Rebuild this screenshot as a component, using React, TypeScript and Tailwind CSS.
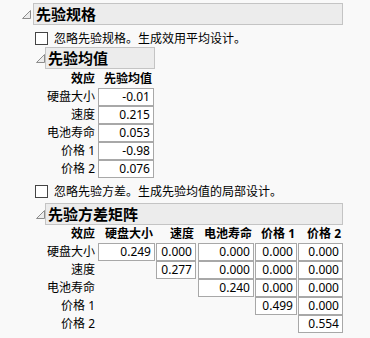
import React from "react";

const Tri = () => (
  <svg width="9" height="9" viewBox="0 0 9 9" className="shrink-0 block">
    <polygon points="8.5,0.5 8.5,8.5 0.5,8.5" fill="#ececec" stroke="#8c8c8c" strokeWidth="1" />
  </svg>
);

const CheckRow = ({ text }: { text: string }) => (
  <div className="flex items-center h-[13px]">
    <div className="w-[13px] h-[13px] border border-[#444] bg-white shrink-0" />
    <span className="ml-[6px] text-[12px] leading-[13px] whitespace-nowrap">{text}</span>
  </div>
);

const Box = ({ v, w }: { v: string; w: string }) => (
  <div className={`${w} h-[18px] border border-[#a8a8a8] bg-white flex items-center justify-end pr-[3px] text-[12px] leading-none`}>
    {v}
  </div>
);

const means = [
  ["硬盘大小", "-0.01"],
  ["速度", "0.215"],
  ["电池寿命", "0.053"],
  ["价格 1", "-0.98"],
  ["价格 2", "0.076"],
];

const cols = ["硬盘大小", "速度", "电池寿命", "价格 1", "价格 2"];
const colW = ["w-[58px]", "w-[42px]", "w-[57px]", "w-[43px]", "w-[45px]"];
const boxW = ["w-[57px]", "w-[40px]", "w-[56px]", "w-[42px]", "w-[45px]"];
const matrix = [
  ["0.249", "0.000", "0.000", "0.000", "0.000"],
  ["", "0.277", "0.000", "0.000", "0.000"],
  ["", "", "0.240", "0.000", "0.000"],
  ["", "", "", "0.499", "0.000"],
  ["", "", "", "", "0.554"],
];

export default function App() {
  return (
    <div className="w-[370px] h-[338px] bg-[#f9f9f9] text-black overflow-hidden font-['Noto_Sans','Noto_Sans_CJK_SC',sans-serif]">
      <div className="pt-[3px]">
        <div className="flex items-center h-[22px] pl-[22px]">
          <Tri />
          <div className="ml-[2px] w-[310px] h-[22px] bg-[#ececec] border border-[#c4c4c4] flex items-center pl-[2px] text-[15px] font-bold leading-none">
            先验规格
          </div>
        </div>
        <div className="pl-[35px]">
          <div className="mt-[7px]">
            <CheckRow text="忽略先验规格。生成效用平均设计。" />
          </div>
          <div className="mt-[2px] flex items-center h-[22px] pl-[1px]">
            <Tri />
            <div className="w-[110px] h-[22px] bg-[#ececec] border border-[#c4c4c4] flex items-center pl-[2px] text-[15px] font-bold leading-none">
              先验均值
            </div>
          </div>
          <div className="pl-[10px]">
            <div className="flex items-center h-[19px] text-[12px] font-bold">
              <div className="w-[50px] text-right">效应</div>
              <div className="ml-[3px] w-[56px] text-right pr-[2px]">先验均值</div>
            </div>
            {means.map(([l, v]) => (
              <div key={l} className="flex items-center h-[18px] text-[12px]">
                <div className="w-[50px] text-right whitespace-nowrap">{l}</div>
                <div className="ml-[3px]">
                  <Box v={v} w="w-[56px]" />
                </div>
              </div>
            ))}
          </div>
          <div className="mt-[7px]">
            <CheckRow text="忽略先验方差。生成先验均值的局部设计。" />
          </div>
          <div className="mt-[5px] flex items-center h-[22px] pl-[1px]">
            <Tri />
            <div className="w-[298px] h-[22px] bg-[#ececec] border border-[#c4c4c4] flex items-center pl-[2px] text-[15px] font-bold leading-none">
              先验方差矩阵
            </div>
          </div>
          <div className="pl-[10px]">
            <div className="flex items-center h-[18px] text-[12px] font-bold">
              <div className="w-[50px] text-right">效应</div>
              <div className="ml-[3px] flex">
                {cols.map((c, i) => (
                  <div key={c} className={`${colW[i]} flex`}>
                    <div className={`${boxW[i]} text-right pr-[2px] whitespace-nowrap`}>{c}</div>
                  </div>
                ))}
              </div>
            </div>
            {matrix.map((row, r) => (
              <div key={r} className="flex items-center h-[18px] text-[12px]">
                <div className="w-[50px] text-right whitespace-nowrap">{cols[r]}</div>
                <div className="ml-[3px] flex">
                  {row.map((v, i) => (
                    <div key={i} className={`${colW[i]} flex`}>
                      {v ? <Box v={v} w={boxW[i]} /> : null}
                    </div>
                  ))}
                </div>
              </div>
            ))}
          </div>
        </div>
      </div>
    </div>
  );
}
